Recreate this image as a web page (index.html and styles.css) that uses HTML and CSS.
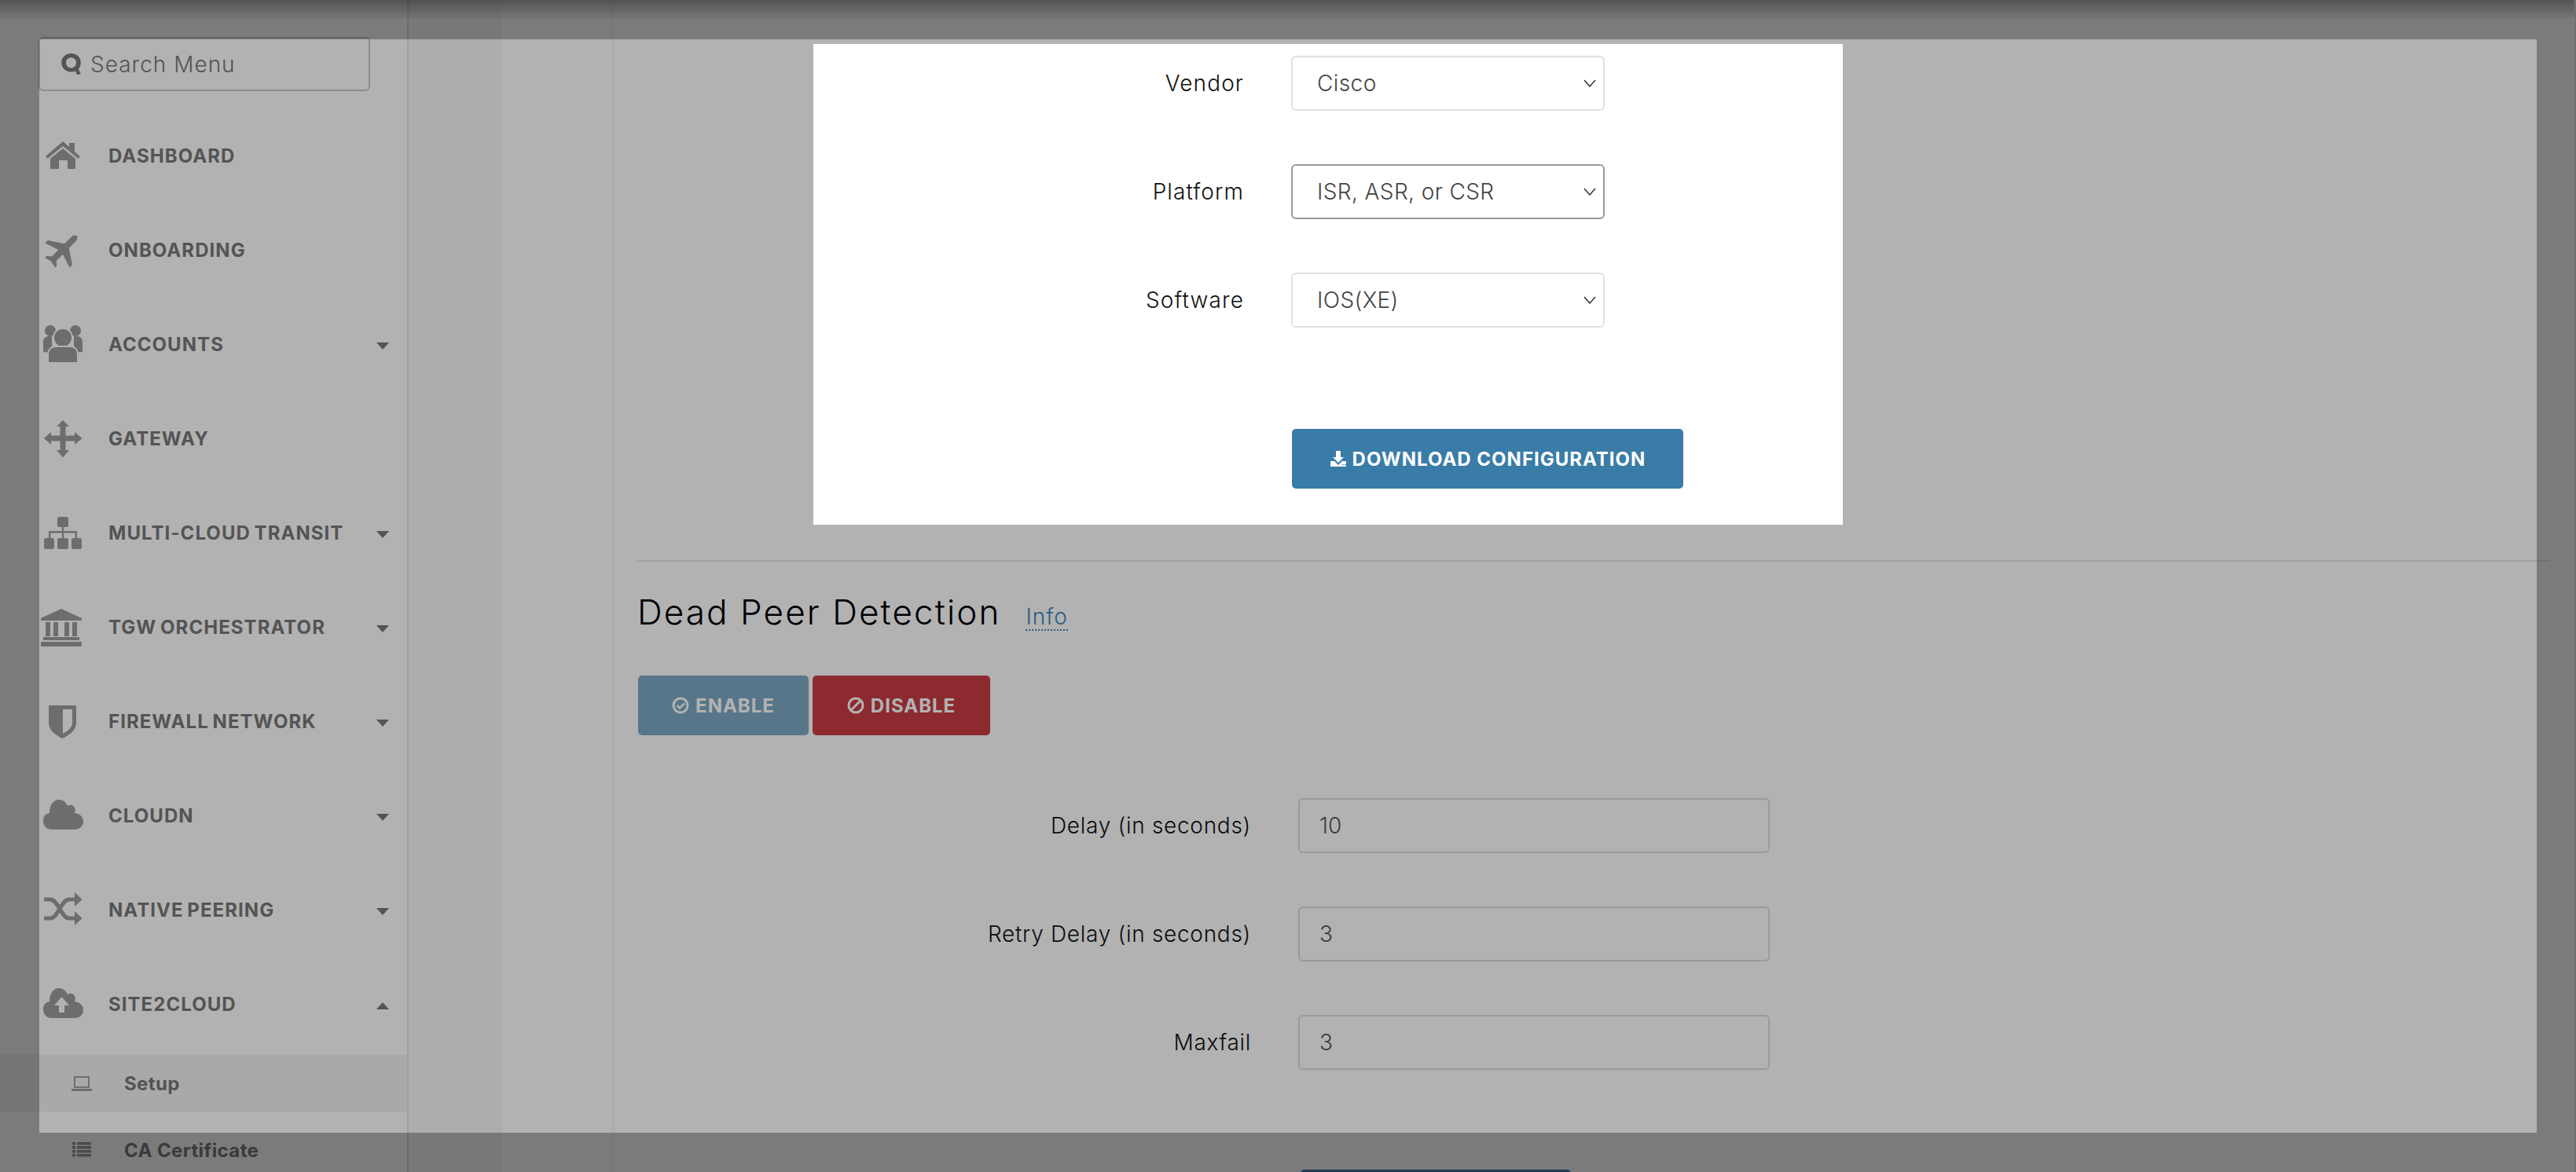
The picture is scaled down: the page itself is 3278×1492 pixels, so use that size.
FILE: index.html
```html
<!DOCTYPE html>
<html lang="en">
<head>
  <meta charset="UTF-8" />
  <title>Site2Cloud Setup</title>
  <link rel="stylesheet" href="styles.css">
</head>
<body>
  <div class="page">
    <aside class="sidebar">
      <div class="search">
        <svg class="search-icon" viewBox="0 0 26 26"><path d="M13 1C6.500 1 2 5.600 2 11.500S6.500 22 13 22c1.700 0 3.300-.3 4.700-1l2.300 4.500 4-1.500-2.600-5.200C23.200 17 24 14.400 24 11.500 24 5.600 19.500 1 13 1zm0 4.500c3.600 0 5.800 2.700 5.800 6s-2.200 6-5.800 6-5.800-2.700-5.800-6 2.200-6 5.800-6z"/></svg>
        <span>Search Menu</span>
      </div>
      <nav class="menu">
        <a class="menu-item">
          <svg viewBox="0 0 56 56"><path d="M28 10l8 7v-5h7v11l7 6-2.500 3L28 16 8.500 32 6 29z"/><path d="M28 19l16 13v13H34V34H23v11H12V32z"/></svg>
          DASHBOARD
        </a>
        <a class="menu-item">
          <svg viewBox="0 0 56 56"><path transform="rotate(45 28 28)" d="M28 3c2.500 0 4 3 4 7v11l18 12v5l-18-6v12l5 4v3l-9-2-9 2v-3l5-4V32L6 38v-5l18-12V10c0-4 1.500-7 4-7z"/></svg>
          ONBOARDING
        </a>
        <a class="menu-item">
          <svg viewBox="0 0 56 56"><circle cx="12" cy="11" r="7"/><circle cx="44" cy="11" r="7"/><path d="M3 38V25c0-4 3-7 7-7h4v21zM53 38V25c0-4-3-7-7-7h-4v21z"/><circle cx="28" cy="20" r="12" stroke="#fff" stroke-width="2"/><path d="M9 52V42c0-7 4-11 10-11h18c6 0 10 4 10 11v10z" stroke="#fff" stroke-width="2"/></svg>
          ACCOUNTS <i class="caret"></i>
        </a>
        <a class="menu-item">
          <svg viewBox="0 0 56 56"><path d="M28 5l8 8h-4.500v11.500H43V20l9.500 8-9.500 8v-4.500H31.500V43H36l-8 9.500L20 43h4.500V31.500H13V36l-9-8 9-8v4.500h11.500V13H20z"/></svg>
          GATEWAY
        </a>
        <a class="menu-item">
          <svg viewBox="0 0 56 56"><rect x="21" y="8" width="14" height="13" rx="2.500"/><rect x="4" y="35" width="13" height="14" rx="2.500"/><rect x="21" y="35" width="14" height="14" rx="2.500"/><rect x="39" y="35" width="13" height="14" rx="2.500"/><path d="M26.800 21h2.400v5H46v9h-2.400v-6.500H29.200V35h-2.400v-6.500H12.400V35H10v-9h16.800z"/></svg>
          MULTI-CLOUD TRANSIT <i class="caret"></i>
        </a>
        <a class="menu-item">
          <svg viewBox="0 0 56 56"><path d="M26 5l26 12v3H0v-3z"/><rect x="6" y="22" width="6" height="18"/><rect x="16" y="22" width="6" height="18"/><rect x="30" y="22" width="6" height="18"/><rect x="40" y="22" width="6" height="18"/><rect x="3" y="41" width="46" height="4"/><rect y="47" width="52" height="6" rx="1"/></svg>
          TGW ORCHESTRATOR <i class="caret"></i>
        </a>
        <a class="menu-item">
          <svg viewBox="0 0 56 56"><path fill-rule="evenodd" d="M10 8h35v22c0 10-9 16-17.500 20C19 46 10 40 10 30zm18 5v31c6-3 12-8 12-14V13z"/></svg>
          FIREWALL NETWORK <i class="caret"></i>
        </a>
        <a class="menu-item">
          <svg viewBox="0 0 56 56"><path d="M14 46C7 46 3 41 3 35c0-6 3-9 8-10 0-10 5-17 12-17 6 0 9 4 11 8 2-2 7-2 9 2 1 2 1 5 0 7 7 1 11 5 11 11s-5 10-11 10z"/></svg>
          CLOUDN <i class="caret"></i>
        </a>
        <a class="menu-item">
          <svg viewBox="0 0 56 56"><path fill="none" stroke="#9c9c9c" stroke-width="5" d="M4 15h8c10 0 14 24 24 24h8M4 39h8c10 0 14-24 24-24h8"/><path d="M43 6l9.500 9-9.500 9zM43 30l9.500 9-9.500 9z"/></svg>
          NATIVE PEERING <i class="caret"></i>
        </a>
        <a class="menu-item">
          <svg viewBox="0 0 56 56"><path fill-rule="evenodd" d="M14 46C7 46 3 41 3 35c0-6 3-9 8-10 0-10 5-17 12-17 6 0 9 4 11 8 2-2 7-2 9 2 1 2 1 5 0 7 7 1 11 5 11 11s-5 10-11 10zm9-7h7V30h6L26.500 19 17 30h6z"/></svg>
          SITE2CLOUD <i class="caret caret-up"></i>
        </a>
      </nav>
      <a class="sub-item active">
        <svg viewBox="0 0 28 28"><path fill-rule="evenodd" d="M4 5h20v15H4zm2 2v11h16V7z"/><path d="M1 21h26v1.500c0 1-.5 1.500-1.500 1.500h-23C1.500 24 1 23.500 1 22.500z"/></svg>
        Setup
      </a>
      <a class="sub-item">
        <svg viewBox="0 0 28 28"><path d="M2 4h4v3.500H2zM8 4h18v3.500H8zM2 9h4v3.500H2zM8 9h18v3.500H8zM2 14h4v3.500H2zM8 14h18v3.500H8zM2 19h4v3.500H2zM8 19h18v3.500H8z"/></svg>
        CA Certificate
      </a>
    </aside>
    <div class="band"></div>
    <div class="gutter"></div>
    <main class="content">
      <hr class="rule">
      <div class="section-head">
        <h2>Dead Peer Detection</h2>
        <a class="info">Info</a>
      </div>
      <div class="toggle">
        <button class="btn btn-enable">
          <svg viewBox="0 0 22 22"><circle cx="11" cy="11" r="9" fill="none" stroke="currentColor" stroke-width="3"/><path d="M6.500 11l3.500 3.500 6-6" fill="none" stroke="currentColor" stroke-width="2.500"/></svg>
          ENABLE
        </button>
        <button class="btn btn-disable">
          <svg viewBox="0 0 22 22"><circle cx="11" cy="11" r="9" fill="none" stroke="currentColor" stroke-width="3"/><path d="M5 17L17 5" fill="none" stroke="currentColor" stroke-width="3"/></svg>
          DISABLE
        </button>
      </div>
      <form class="dpd-form">
        <label>Delay (in seconds)</label>
        <input type="text" value="10">
        <label>Retry Delay (in seconds)</label>
        <input type="text" value="3">
        <label>Maxfail</label>
        <input type="text" value="3">
      </form>
      <button class="btn btn-save"></button>
    </main>
  </div>

  <div class="top-shade"></div>
  <div class="scroll-edge"></div>
  <div class="backdrop">
    <div class="modal">
      <div class="modal-form">
        <label>Vendor</label>
        <select class="pick"><option>Cisco</option></select>
        <label>Platform</label>
        <select class="pick pick-focus"><option>ISR, ASR, or CSR</option></select>
        <label>Software</label>
        <select class="pick"><option>IOS(XE)</option></select>
      </div>
      <button class="btn btn-download">
        <svg viewBox="0 0 22 22"><path d="M8 1h6v8h4l-7 7-7-7h4z"/><path fill-rule="evenodd" d="M1 14h5l5 5 5-5h5v7H1zm15 4v1.500h1.500V18zm3 0v1.500h1.500V18z"/></svg>
        DOWNLOAD CONFIGURATION
      </button>
    </div>
  </div>
</body>
</html>
```

FILE: styles.css
```css
* {
  box-sizing: border-box;
  margin: 0;
  padding: 0;
}

html, body {
  height: 1492px;
  overflow: hidden;
}

body {
  background-color: #fff;
  color: #000;
  font-family: Inter, "Open Sans", sans-serif;
}

.page {
  display: flex;
  height: 1492px;
  overflow: hidden;
}

/* sidebar */
.sidebar {
  width: 520px;
  flex: none;
  border-right: 2px solid #e3e3e3;
  padding-top: 47px;
}

.search {
  display: flex;
  align-items: center;
  gap: 10px;
  width: 422px;
  height: 69px;
  margin-left: 49px;
  padding-left: 25px;
  border: 2px solid #ccc;
  border-radius: 6px;
  color: #797979;
  font-size: 28px;
  font-weight: 300;
  letter-spacing: 1px;
}

.search-icon {
  width: 29px;
  height: 29px;
  fill: #797979;
}

.menu {
  margin-top: 22px;
}

.menu-item {
  display: flex;
  align-items: center;
  height: 120px;
  padding: 0 23px 0 52px;
  color: #797979;
  font-size: 24px;
  font-weight: 700;
  letter-spacing: 1.050px;
  word-spacing: -2px;
}

.menu-item svg {
  width: 56px;
  height: 56px;
  margin-right: 30px;
  fill: #9c9c9c;
}

.caret {
  width: 0;
  height: 0;
  margin: 5px 0 0 auto;
  border-left: 8px solid transparent;
  border-right: 8px solid transparent;
  border-top: 9px solid #797979;
}

.caret-up {
  border-top: 0;
  border-bottom: 9px solid #797979;
}

.sub-item {
  display: flex;
  align-items: center;
  height: 72px;
  margin-top: 13px;
  padding-left: 90px;
  color: #797979;
  font-size: 24px;
  font-weight: 700;
  letter-spacing: .4px;
}

.sub-item svg {
  width: 28px;
  height: 28px;
  margin-right: 40px;
  fill: #9c9c9c;
}

.sub-item.active {
  margin-top: 5px;
  background-color: #f2f2f2;
}

.band {
  width: 119px;
  flex: none;
  background-color: #f8f8f8;
}

.gutter {
  width: 143px;
  flex: none;
  border-right: 4px solid #f8f8f8;
}

/* main */
.content {
  flex: 1;
  padding: 713px 33px 0 28px;
}

.rule {
  border: 0;
  border-top: 2px solid #e8e8e8;
}

.section-head {
  display: flex;
  align-items: baseline;
  gap: 32px;
  margin-top: 36px;
  padding-left: 1px;
}

h2 {
  font-size: 44px;
  font-weight: 300;
  line-height: 56px;
  letter-spacing: 2.100px;
}

.info {
  color: #3b88ba;
  font-size: 28px;
  line-height: 31px;
  font-weight: 300;
  letter-spacing: 1px;
  border-bottom: 2px dotted #3b88ba;
}

.toggle {
  display: flex;
  gap: 5px;
  margin-top: 53px;
  padding-left: 2px;
}

.btn {
  display: flex;
  align-items: center;
  justify-content: center;
  height: 76px;
  border: 0;
  border-radius: 5px;
  color: #fff;
  font-family: inherit;
  font-size: 24px;
  font-weight: 700;
  letter-spacing: 1px;
}

.btn svg {
  width: 22px;
  height: 22px;
  margin-right: 8px;
  fill: currentColor;
}

.btn-enable {
  width: 217px;
  background-color: #7da9c4;
}

.btn-disable {
  width: 226px;
  background-color: #c93d44;
}

.dpd-form {
  display: grid;
  grid-template-columns: 782px 600px;
  column-gap: 60px;
  row-gap: 68px;
  align-items: center;
  margin-top: 80px;
}

.dpd-form label {
  text-align: right;
  font-size: 28px;
  font-weight: 350;
  color: #111;
  letter-spacing: .7px;
}

.dpd-form input {
  height: 70px;
  padding: 0 25px;
  font-family: inherit;
  font-size: 28px;
  font-weight: 300;
  color: #555;
  background: #fff;
  border: 2px solid #ddd;
  border-radius: 6px;
}

.btn-save {
  width: 344px;
  margin: 127px 0 0 845px;
  background-color: #3b7ca8;
}

/* overlay */
.top-shade {
  position: absolute;
  left: 0;
  top: 0;
  width: 100%;
  height: 26px;
  background: linear-gradient(rgba(0,0,0,.32), rgba(0,0,0,0));
}

.scroll-edge {
  position: absolute;
  right: 0;
  top: 0;
  width: 2px;
  height: 100%;
  background-color: #e8e8e8;
}

.backdrop {
  position: absolute;
  left: 50px;
  top: 50px;
  width: 3178px;
  height: 1392px;
  background: rgba(0,0,0,.302);
  box-shadow: 0 0 0 4000px rgba(0,0,0,.518);
}

.modal {
  position: absolute;
  left: 985px;
  top: 6px;
  width: 1310px;
  height: 612px;
  padding-top: 15px;
  background-color: #fff;
}

.modal-form {
  display: grid;
  grid-template-columns: 548px 399px;
  column-gap: 60px;
  row-gap: 68px;
  align-items: center;
}

.modal-form label {
  text-align: right;
  font-size: 28px;
  font-weight: 350;
  color: #111;
  letter-spacing: 1.100px;
}

.pick {
  appearance: none;
  height: 70px;
  padding-left: 31px;
  font-family: inherit;
  font-size: 28px;
  font-weight: 300;
  letter-spacing: .4px;
  color: #444;
  border: 2px solid #e0e0e0;
  border-radius: 6px;
  background: #fff url("data:image/svg+xml,%3Csvg xmlns='http://www.w3.org/2000/svg' width='16' height='10'%3E%3Cpath d='M1 1l7 8 7-8' fill='none' stroke='%23333' stroke-width='1.500'/%3E%3C/svg%3E") no-repeat right 9px center;
}

.pick-focus {
  border-color: #999;
}

.btn-download {
  width: 498px;
  margin: 129px 0 0 609px;
  background-color: #3a7ca8;
}

.btn-download svg {
  margin-right: 7px;
}
```
